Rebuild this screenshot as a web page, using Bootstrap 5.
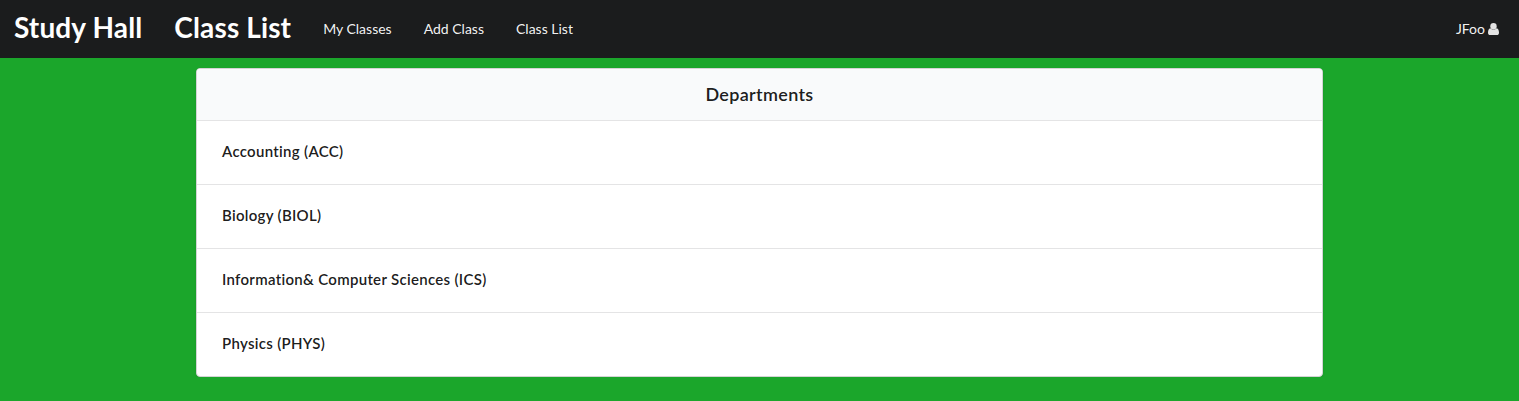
<!DOCTYPE html>
<html lang="en">
<head>
<meta charset="utf-8">
<meta name="viewport" content="width=device-width, initial-scale=1">
<title>Study Hall</title>
<link href="https://cdn.jsdelivr.net/npm/bootstrap@5.3.0/dist/css/bootstrap.min.css" rel="stylesheet">
<style>
body{font-family:Lato,"Liberation Sans",sans-serif;font-size:14px;line-height:1.4285;background:#1ba62b;color:rgba(0,0,0,.9)}
.topbar{background:#1b1c1d;height:58px}
.topbar a{padding:0 16px;line-height:1;color:rgba(255,255,255,.96);text-decoration:none}
.topbar .brand-title{font-size:28px;font-weight:700;line-height:36px;letter-spacing:.13px;margin:-5px 0 0;color:#fff}
.topbar a.first{padding-left:14px}
.topbar a.user{padding-right:20px}
.user-icon{margin-left:3px}
.dept-card{width:1127px;margin-top:10px;border:1px solid #d4d4d5;border-radius:4px;box-shadow:0 1px 2px 0 rgba(34,36,38,.15);background:#fff;overflow:hidden}
.dept-head{background:#f9fafb;height:51px;font-size:18px;font-weight:600;letter-spacing:.33px}
.dept-row{height:64px;padding:0 25px 2px;font-size:15px;font-weight:600;letter-spacing:.3px;border-top:1px solid rgba(34,36,38,.12)}
</style>
</head>
<body>
<nav class="topbar d-flex align-items-center">
<a class="first" href="#"><h1 class="brand-title">Study Hall</h1></a>
<a href="#"><h1 class="brand-title">Class List</h1></a>
<a href="#">My Classes</a>
<a href="#">Add Class</a>
<a href="#">Class List</a>
<a class="user ms-auto d-flex align-items-center" href="#">JFoo<svg class="user-icon" width="11" height="12" viewBox="0 0 11 12" fill="#e4e4e4"><circle cx="5.500" cy="3.200" r="3.200"/><path d="M2.300 5.200C.7 5.600 0 7.600 0 9.700C0 11.100.9 12 2.200 12h6.600C10.100 12 11 11.100 11 9.700C11 7.600 10.300 5.600 8.700 5.200C7 6.900 4 6.900 2.300 5.200z"/></svg></a>
</nav>
<main class="dept-card mx-auto">
<div class="dept-head d-flex align-items-center justify-content-center">Departments</div>
<div class="dept-row d-flex align-items-center">Accounting (ACC)</div>
<div class="dept-row d-flex align-items-center">Biology (BIOL)</div>
<div class="dept-row d-flex align-items-center">Information&amp; Computer Sciences (ICS)</div>
<div class="dept-row d-flex align-items-center">Physics (PHYS)</div>
</main>
<script src="https://cdn.jsdelivr.net/npm/bootstrap@5.3.0/dist/js/bootstrap.bundle.min.js"></script>
</body>
</html>
